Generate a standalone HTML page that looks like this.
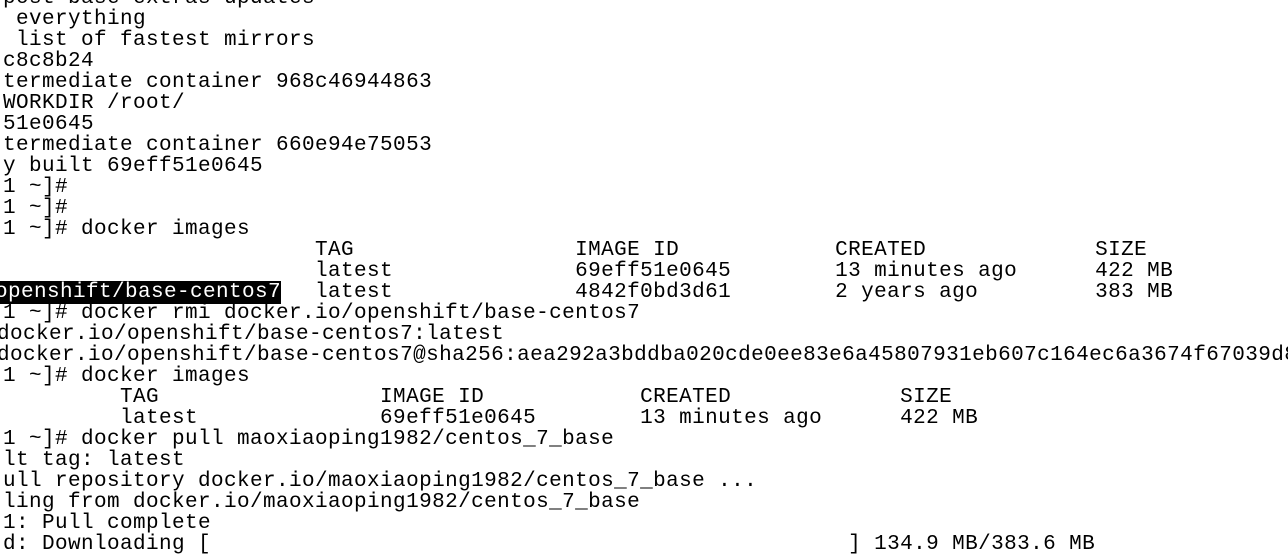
<!DOCTYPE html>
<html><head><style>
html,body{margin:0;padding:0;background:#fff;width:1288px;height:536px;overflow:hidden;}
pre{position:absolute;left:3px;top:-12px;margin:0;font-family:"Liberation Mono",monospace;font-size:21px;letter-spacing:0.4px;line-height:21px;color:#000;}
.h{background:#000;color:#fff;position:relative;left:-8px;}
.s{position:relative;left:-6px;}
</style></head><body>
<pre>post base extras updates
 everything
 list of fastest mirrors
c8c8b24
termediate container 968c46944863
WORKDIR /root/
51e0645
termediate container 660e94e75053
y built 69eff51e0645
1 ~]#
1 ~]#
1 ~]# docker images
                        TAG                 IMAGE ID            CREATED             SIZE
                        latest              69eff51e0645        13 minutes ago      422 MB
<span class="h">openshift/base-centos7</span>  latest              4842f0bd3d61        2 years ago         383 MB
1 ~]# docker rmi docker.io/openshift/base-centos7
<span class="s">docker.io/openshift/base-centos7:latest</span>
<span class="s">docker.io/openshift/base-centos7@sha256:aea292a3bddba020cde0ee83e6a45807931eb607c164ec6a3674f67039d8</span>
1 ~]# docker images
         TAG                 IMAGE ID            CREATED             SIZE
         latest              69eff51e0645        13 minutes ago      422 MB
1 ~]# docker pull maoxiaoping1982/centos_7_base
lt tag: latest
ull repository docker.io/maoxiaoping1982/centos_7_base ...
ling from docker.io/maoxiaoping1982/centos_7_base
1: Pull complete
d: Downloading [                                                 ] 134.9 MB/383.6 MB
</pre>
</body></html>
